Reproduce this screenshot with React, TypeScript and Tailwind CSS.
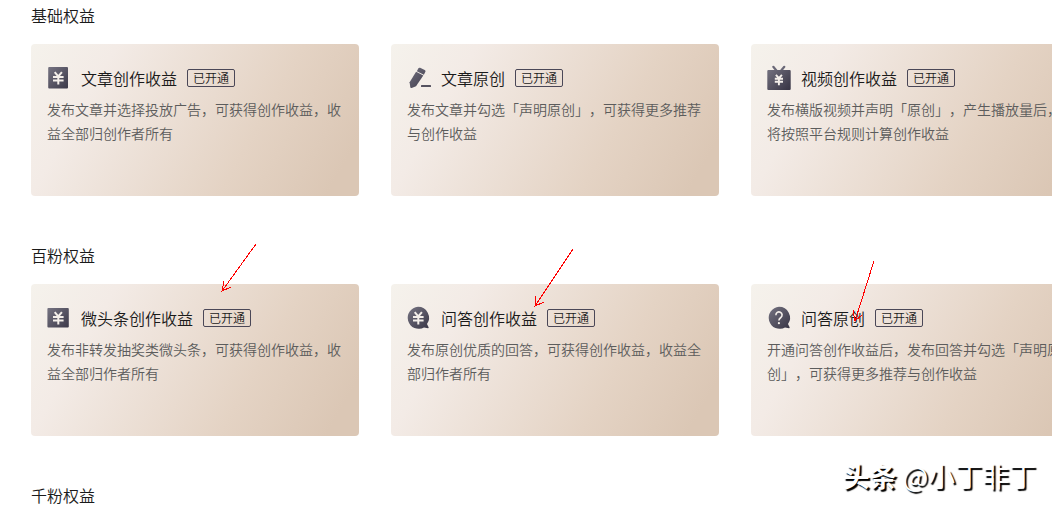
import { ReactNode } from "react";

type Benefit = {
  title: string;
  description: string;
  icon: ReactNode;
};

function IconBase({ id, children }: { id: string; children: ReactNode }) {
  return (
    <svg
      viewBox="0 0 24 24"
      className="h-6 w-6 shrink-0 overflow-visible"
      aria-hidden="true"
    >
      <defs>
        <linearGradient
          id={id}
          gradientUnits="userSpaceOnUse"
          x1="2"
          y1="2"
          x2="22"
          y2="22"
        >
          <stop offset="0" stopColor="#73717f" />
          <stop offset="1" stopColor="#3b3848" />
        </linearGradient>
      </defs>
      {children}
    </svg>
  );
}

function Yen() {
  return (
    <path
      d="M7.7 6.2 11.3 10.4 14.9 6.2M6 10.9h10.6M6 14.4h10.6M11.3 10.4V18.4"
      fill="none"
      stroke="#f4efea"
      strokeWidth="2"
    />
  );
}

function ArticleIcon() {
  return (
    <IconBase id="article">
      <rect x="1.2" y="1" width="19.8" height="21.5" rx="1" fill="url(#article)" />
      <Yen />
    </IconBase>
  );
}

function PenIcon() {
  return (
    <IconBase id="pen">
      <g fill="url(#pen)">
        <path d="M11.4 2.3q.6-1 1.7-.5l4.6 2.2q1.2.6.7 1.7l-1.5 3.1-7-3.6z" />
        <path d="M9.1 5.8 16.3 9.5 9 20.2 4.6 22q-1.1.4-1.3-.7L2.6 16.2z" />
      </g>
      <rect x="14" y="19" width="10" height="2" rx=".5" fill="#55525f" />
    </IconBase>
  );
}

function VideoIcon() {
  return (
    <IconBase id="video">
      <path
        d="M6.3.8 10 5.2M17.3.8 13.6 5.2"
        stroke="#6a6877"
        strokeWidth="2.2"
        strokeLinecap="round"
      />
      <rect x=".3" y="4" width="23.4" height="20" rx="1" fill="url(#video)" />
      <path
        d="M8.9 8.8 11.9 12.2 14.9 8.8M7.8 12.8h8.2M7.8 15.8h8.2M11.9 12.2V19.3"
        fill="none"
        stroke="#f4efea"
        strokeWidth="1.9"
      />
    </IconBase>
  );
}

function PostIcon() {
  return (
    <IconBase id="post">
      <rect x=".4" y="2" width="21.4" height="19.6" rx="1" fill="url(#post)" />
      <Yen />
    </IconBase>
  );
}

function AnswerIcon() {
  return (
    <IconBase id="answer">
      <path
        d="M11 .8a11 11 0 0 1 9 17.3l1.6 3.2q.3.9-.6.9l-4-.8A11 11 0 1 1 11 .8z"
        fill="url(#answer)"
      />
      <Yen />
    </IconBase>
  );
}

function QuestionIcon() {
  return (
    <IconBase id="question">
      <path
        d="M12 .8a11 11 0 0 1 9 17.3l1.6 3.2q.3.9-.6.9l-4-.8A11 11 0 1 1 12 .8z"
        fill="url(#question)"
      />
      <path
        d="M8.9 9.2a3.1 3.1 0 1 1 4.9 2.3c-1.1.8-1.9 1.5-1.9 3.1"
        fill="none"
        stroke="#f4efea"
        strokeWidth="1.6"
      />
      <circle cx="11.9" cy="17.2" r="1.1" fill="#f4efea" />
    </IconBase>
  );
}

const basicBenefits: Benefit[] = [
  {
    title: "文章创作收益",
    description: "发布文章并选择投放广告，可获得创作收益，收益全部归创作者所有",
    icon: <ArticleIcon />,
  },
  {
    title: "文章原创",
    description: "发布文章并勾选「声明原创」，可获得更多推荐与创作收益",
    icon: <PenIcon />,
  },
  {
    title: "视频创作收益",
    description:
      "发布横版视频并声明「原创」，产生播放量后，将按照平台规则计算创作收益",
    icon: <VideoIcon />,
  },
];

const hundredFansBenefits: Benefit[] = [
  {
    title: "微头条创作收益",
    description: "发布非转发抽奖类微头条，可获得创作收益，收益全部归作者所有",
    icon: <PostIcon />,
  },
  {
    title: "问答创作收益",
    description: "发布原创优质的回答，可获得创作收益，收益全部归作者所有",
    icon: <AnswerIcon />,
  },
  {
    title: "问答原创",
    description:
      "开通问答创作收益后，发布回答并勾选「声明原创」，可获得更多推荐与创作收益",
    icon: <QuestionIcon />,
  },
];

function BenefitCard({ title, description, icon }: Benefit) {
  return (
    <li className="min-h-38 w-82 shrink-0 rounded bg-[linear-gradient(120deg,#f5f2ec_0%,#f3ebe6_21%,#e4d3c4_66%,#dbc7b5_92%)] px-4 pt-[22px]">
      <div className="flex items-center gap-2.5">
        {icon}
        <h3 className="text-base leading-6 text-[#1a1a1a]">{title}</h3>
        <span className="rounded-xs border border-[#4a4757] px-[5px] text-xs leading-4 text-[#1a1a1a]">
          已开通
        </span>
      </div>
      <p className="mt-[7px] text-sm leading-6 text-[#5c5c5c]">{description}</p>
    </li>
  );
}

function Section({ title, benefits }: { title: string; benefits: Benefit[] }) {
  return (
    <section>
      <h2 className="text-base leading-6 text-[#1a1a1a]">{title}</h2>
      {benefits.length > 0 && (
        <ul className="mt-[17px] flex gap-8">
          {benefits.map((benefit) => (
            <BenefitCard key={benefit.title} {...benefit} />
          ))}
        </ul>
      )}
    </section>
  );
}

function Arrows() {
  return (
    <svg
      className="pointer-events-none absolute top-0 left-0 h-full w-full"
      fill="none"
      stroke="#f00"
      shapeRendering="crispEdges"
      aria-hidden="true"
    >
      <path d="M256 244 222 291M224 281 222 291 231 287" />
      <path d="M573 249 535 306M536 296 535 306 544 302" />
      <path d="M874 261 855 321M853 310 855 321 862 315" />
    </svg>
  );
}

export default function App() {
  return (
    <main className="relative overflow-hidden bg-white font-['Noto_Sans_CJK_SC',sans-serif] font-[350] [text-spacing-trim:space-all]">
      <div className="flex flex-col gap-[47px] pt-[3px] pb-px pl-[31px]">
        <Section title="基础权益" benefits={basicBenefits} />
        <Section title="百粉权益" benefits={hundredFansBenefits} />
        <Section title="千粉权益" benefits={[]} />
      </div>
      <Arrows />
      <p className="absolute right-4 bottom-4 text-[27px] leading-8 font-normal text-white [text-shadow:2px_2px_1px_#000]">
        <span className="font-bold">头条</span> @小丁非丁
      </p>
    </main>
  );
}
